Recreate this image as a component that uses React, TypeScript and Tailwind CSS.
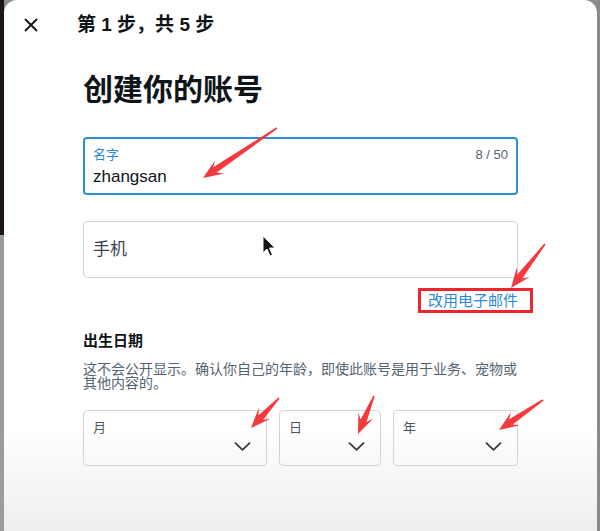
import React from 'react';

type Pt = [number, number];

// red annotation arrow, tail -> tip
const arrowPoints = (tail: Pt, tip: Pt) => {
  const dx = tip[0] - tail[0];
  const dy = tip[1] - tail[1];
  const len = Math.hypot(dx, dy);
  const ux = dx / len, uy = dy / len;
  const nx = -uy, ny = ux;
  const head = 20, wing = 8, neck = 3.2, tailW = 0.8;
  const bx = tip[0] - ux * head * 0.72, by = tip[1] - uy * head * 0.72;
  const wx = tip[0] - ux * head, wy = tip[1] - uy * head;
  const pts: Pt[] = [
    [tail[0] + nx * tailW, tail[1] + ny * tailW],
    [bx + nx * neck, by + ny * neck],
    [wx + nx * wing, wy + ny * wing],
    tip,
    [wx - nx * wing, wy - ny * wing],
    [bx - nx * neck, by - ny * neck],
    [tail[0] - nx * tailW, tail[1] - ny * tailW],
  ];
  return pts.map(p => `${p[0].toFixed(1)},${p[1].toFixed(1)}`).join(' ');
};

const arrows: [Pt, Pt][] = [
  [[277, 128], [203, 178]],
  [[545, 244], [511, 288]],
  [[279, 398], [251, 428]],
  [[374, 396], [358, 434]],
  [[543, 400], [499, 430]],
];

const Chevron: React.FC = () => (
  <svg width="17" height="9" viewBox="0 0 17 9" fill="none" stroke="#333a40" strokeWidth={1.8} strokeLinecap="round" strokeLinejoin="round">
    <path d="M1.5 1.2 L8.5 7.8 L15.5 1.2" />
  </svg>
);

const SelectBox: React.FC<{ label: string; width: string }> = ({ label, width }) => (
  <div className={`${width} h-[56px] rounded-[4px] border border-[#cfd6da] px-[9px] pt-[9px] flex flex-col`}>
    <span className="text-[13px] leading-[16px] text-[#4a5560]">{label}</span>
    <div className="flex justify-end pr-[6px] mt-[6px]">
      <Chevron />
    </div>
  </div>
);

const App: React.FC = () => {
  return (
    <div
      className="relative w-[600px] h-[531px] overflow-hidden bg-[#8f8f8f] flex"
      style={{ fontFamily: '"Liberation Sans", "Noto Sans CJK SC", sans-serif' }}
    >
      <div className="w-[4px] flex flex-col">
        <div className="h-[235px] bg-[#1d141c]" />
        <div className="flex-1 bg-[#9c9c9c]" />
      </div>

      <div className="w-[593px] h-full rounded-t-[13px] bg-gradient-to-b from-white via-white via-80% to-[#eeeeee] flex flex-col">
        <div className="h-[48px] flex items-center">
          <div className="w-[73px] flex justify-center pr-[20px] pt-[2px]">
            <svg width="14" height="14" viewBox="0 0 14 14" stroke="#0f1419" strokeWidth={1.8} strokeLinecap="round">
              <path d="M1.5 1.5 L12.5 12.5 M12.5 1.5 L1.5 12.5" />
            </svg>
          </div>
          <span className="pt-[3px] text-[19px] font-bold text-[#0f1419]">第 1 步，共 5 步</span>
        </div>

        <div className="ml-[79px] w-[435px] flex flex-col">
          <h1 className="mt-[24px] text-[30px] leading-[36px] font-bold text-[#0f1419]">创建你的账号</h1>

          <div className="mt-[29px] h-[58px] rounded-[4px] border-2 border-[#2f8fd6] px-[8px] pt-[8px]">
            <div className="flex justify-between text-[13px] leading-[16px]">
              <span className="text-[#2b8ad6]">名字</span>
              <span className="text-[#536471]">8 / 50</span>
            </div>
            <div className="mt-[2px] text-[17px] leading-[24px] text-[#0f1419]">zhangsan</div>
          </div>

          <div className="mt-[26px] h-[57px] rounded-[4px] border border-[#cfd6da] px-[9px] flex items-center">
            <span className="text-[17px] text-[#3d454c]">手机</span>
          </div>

          <div className="mt-[13px] flex justify-end">
            <span className="relative text-[15px] leading-[20px] text-[#2d8ad8]">
              改用电子邮件
              <span className="absolute -left-[10px] -right-[15px] -top-[3px] -bottom-[2px] border-[3px] border-[#f0262e]" />
            </span>
          </div>

          <h2 className="mt-[20px] text-[15px] leading-[20px] font-bold text-[#0f1419]">出生日期</h2>
          <p className="mt-[11px] text-[14px] leading-[14px] text-[#536471]">
            这不会公开显示。确认你自己的年龄，即使此账号是用于业务、宠物或其他内容的。
          </p>

          <div className="mt-[20px] flex gap-[12px]">
            <SelectBox label="月" width="w-[184px]" />
            <SelectBox label="日" width="w-[102px]" />
            <SelectBox label="年" width="w-[125px]" />
          </div>
        </div>
      </div>

      <div className="flex-1 bg-[#8a8a8a]" />

      {/* annotations drawn over the screen */}
      <svg className="absolute inset-0 pointer-events-none" width="600" height="531" viewBox="0 0 600 531">
        {arrows.map(([t, p], i) => (
          <polygon key={i} points={arrowPoints(t, p)} fill="#f23a3f" />
        ))}
        <path
          d="M263 236 L263 253 L267 249 L270 256 L272.5 255 L269.5 248 L275 248 Z"
          fill="#111"
          stroke="#fff"
          strokeWidth={1}
          strokeLinejoin="round"
        />
      </svg>
    </div>
  );
};

export default App;
